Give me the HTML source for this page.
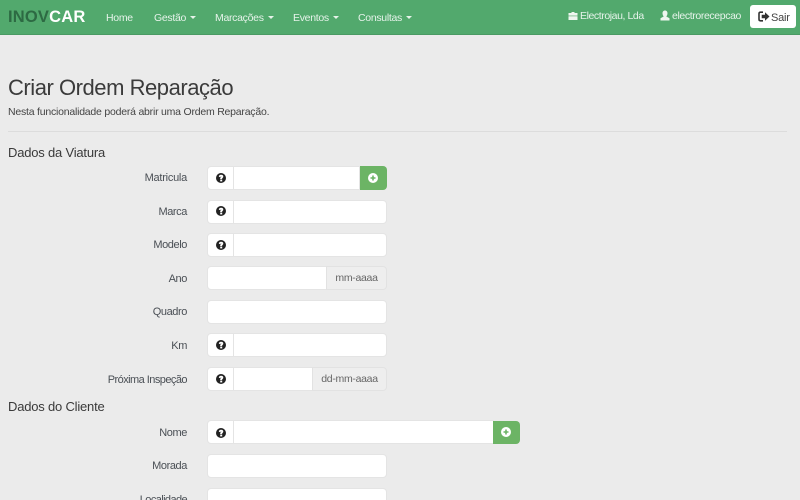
<!DOCTYPE html>
<html lang="pt">
<head>
<meta charset="utf-8">
<title>Criar Ordem Reparação</title>
<style>
html,body{margin:0;padding:0;width:800px;height:500px;overflow:hidden;background:#ebebeb;font-family:"Liberation Sans",sans-serif;color:#333}
#w{position:relative;width:800px;height:500px;overflow:hidden}
.t{position:absolute;white-space:nowrap;line-height:1}
#nav{position:absolute;left:0;top:0;width:800px;height:34px;background:#52a96d;border-bottom:1px solid #4a9a63}
.n{color:#e6f3ea;font-size:10.5px;letter-spacing:-.3px;top:12.500px}
.c{display:inline-block;width:0;height:0;border-left:3px solid transparent;border-right:3px solid transparent;border-top:3px solid #e6f3ea;margin-left:4px;vertical-align:2px}
.l{font-size:11px;color:#4a4f55;width:180px;text-align:right;left:7px;letter-spacing:-.4px}
.b{position:absolute;box-sizing:border-box;background:#fff;border:1px solid #e4e4e4;height:24px}
.g{background:#eee;border:1px solid #e2e2e2;box-sizing:border-box;position:absolute;height:24px;color:#666;font-size:10.5px;letter-spacing:-.3px;text-align:center;line-height:22px;border-radius:0 4px 4px 0}
.a{position:absolute;height:24px;width:27px;background:#6cb465;border-radius:0 4px 4px 0}
.h{font-size:13px;color:#3a3a3a;left:8px;letter-spacing:-.2px}
svg{position:absolute}
</style>
</head>
<body>
<div id="w">
<div id="nav"></div>
<div class="t" style="left:8px;top:9px;font-size:16.5px;font-weight:bold;letter-spacing:.2px;color:#2d6a43">INOV<span style="color:#fff">CAR</span></div>
<div class="t n" style="left:106px">Home</div>
<div class="t n" style="left:154px">Gestão<i class="c"></i></div>
<div class="t n" style="left:215px">Marcações<i class="c"></i></div>
<div class="t n" style="left:293px">Eventos<i class="c"></i></div>
<div class="t n" style="left:358px">Consultas<i class="c"></i></div>

<svg style="left:568px;top:11px" width="10" height="9" viewBox="0 0 10 9"><path d="M3.500 2V1h3v1h3v2.600H.5V2zM.5 5.200h9V9H.5z" fill="#eef6f0"/></svg>
<div class="t" style="left:580px;top:10.500px;font-size:10.500px;color:#e6f3ea;letter-spacing:-.42px">Electrojau, Lda</div>
<svg style="left:660px;top:10px" width="10" height="11" viewBox="0 0 10 11"><path d="M5 .5c1.600 0 2.500 1.200 2.500 2.800S6.600 6.200 6.300 6.500l3.200 1.700V10.500H.5V8.200l3.200-1.700C3.400 6.200 2.500 4.900 2.500 3.300S3.400.5 5 .5z" fill="#eef6f0"/></svg>
<div class="t" style="left:672px;top:10.500px;font-size:10.500px;color:#e6f3ea;letter-spacing:-.38px">electrorecepcao</div>
<div style="position:absolute;left:750px;top:5px;width:46px;height:23px;background:#fff;border-radius:3px"></div>
<svg style="left:758px;top:11px" width="12" height="11" viewBox="0 0 12 11"><path d="M5 1.200H2.500Q1 1.200 1 2.700v5.600q0 1.500 1.500 1.500H5" fill="none" stroke="#333" stroke-width="1.600"/><path d="M3.700 3.800H7V1.300l4.500 4.200L7 9.700V7.200H3.700z" fill="#333"/></svg>
<div class="t" style="left:771px;top:12.500px;font-size:11px;color:#444;letter-spacing:-.2px">Sair</div>

<div class="t" style="left:8px;top:77px;font-size:22px;color:#3b3b3b;letter-spacing:-.46px">Criar Ordem Reparação</div>
<div class="t" style="left:8px;top:107px;font-size:10.500px;color:#444;letter-spacing:-.22px">Nesta funcionalidade poderá abrir uma Ordem Reparação.</div>
<div style="position:absolute;left:8px;top:131px;width:779px;height:1px;background:#dcdcdc"></div>

<div class="t h" style="top:146px">Dados da Viatura</div>
<div class="t h" style="top:400px">Dados do Cliente</div>

<div class="t l" style="top:173px;letter-spacing:-.25px">Matricula</div>
<div class="b" style="left:207px;top:166px;width:27px;border-radius:4px 0 0 4px"></div>
<div class="b" style="left:233px;top:166px;width:127px"></div>
<div class="a" style="left:360px;top:166px"></div>

<div class="t l" style="top:206.500px">Marca</div>
<div class="b" style="left:207px;top:199.500px;width:27px;border-radius:4px 0 0 4px"></div>
<div class="b" style="left:233px;top:199.500px;width:154px;border-radius:0 4px 4px 0"></div>

<div class="t l" style="top:240px">Modelo</div>
<div class="b" style="left:207px;top:233px;width:27px;border-radius:4px 0 0 4px"></div>
<div class="b" style="left:233px;top:233px;width:154px;border-radius:0 4px 4px 0"></div>

<div class="t l" style="top:274px">Ano</div>
<div class="b" style="left:207px;top:266px;width:120px;border-radius:4px 0 0 4px"></div>
<div class="g" style="left:326px;top:266px;width:61px">mm-aaaa</div>

<div class="t l" style="top:307px">Quadro</div>
<div class="b" style="left:207px;top:300px;width:180px;border-radius:4px"></div>

<div class="t l" style="top:341px">Km</div>
<div class="b" style="left:207px;top:333px;width:27px;border-radius:4px 0 0 4px"></div>
<div class="b" style="left:233px;top:333px;width:154px;border-radius:0 4px 4px 0"></div>

<div class="t l" style="top:375px;letter-spacing:-.55px">Próxima Inspeção</div>
<div class="b" style="left:207px;top:367px;width:27px;border-radius:4px 0 0 4px"></div>
<div class="b" style="left:233px;top:367px;width:80px"></div>
<div class="g" style="left:312px;top:367px;width:75px">dd-mm-aaaa</div>

<div class="t l" style="top:428px">Nome</div>
<div class="b" style="left:207px;top:420px;width:27px;border-radius:4px 0 0 4px"></div>
<div class="b" style="left:233px;top:420px;width:261px"></div>
<div class="a" style="left:493px;top:421px;height:23px"></div>

<div class="t l" style="top:461px">Morada</div>
<div class="b" style="left:207px;top:454px;width:180px;border-radius:4px"></div>

<div class="t l" style="top:495px;letter-spacing:-.6px">Localidade</div>
<div class="b" style="left:207px;top:488px;width:180px;border-radius:4px"></div>

<svg width="0" height="0" style="position:absolute"><defs>
<g id="q"><circle cx="5" cy="5" r="5" fill="#222"/><path d="M2.800 3.800Q3 1.800 5.100 1.800 7.300 1.800 7.300 3.600 7.300 4.600 6.200 5.300V6.200H4.200V4.700L5.300 3.900 5.100 3.500 4.700 3.600 4.400 4.100z" fill="#fff"/><rect x="4.200" y="6.800" width="2" height="1.600" fill="#fff"/></g>
<g id="p"><circle cx="5" cy="5" r="5" fill="#fff"/><path d="M4.200 2.500h1.600v1.700h1.700v1.600H5.800v1.700H4.200V5.800H2.500V4.200h1.700z" fill="#6cb465"/></g>
</defs></svg>
<svg style="left:216px;top:173px" width="10" height="10"><use href="#q"/></svg>
<svg style="left:216px;top:206px" width="10" height="10"><use href="#q"/></svg>
<svg style="left:216px;top:240px" width="10" height="10"><use href="#q"/></svg>
<svg style="left:216px;top:340px" width="10" height="10"><use href="#q"/></svg>
<svg style="left:216px;top:374px" width="10" height="10"><use href="#q"/></svg>
<svg style="left:216px;top:428px" width="10" height="10"><use href="#q"/></svg>
<svg style="left:368px;top:173px" width="10" height="10"><use href="#p"/></svg>
<svg style="left:501px;top:427px" width="10" height="10"><use href="#p"/></svg>
</div>
</body>
</html>
